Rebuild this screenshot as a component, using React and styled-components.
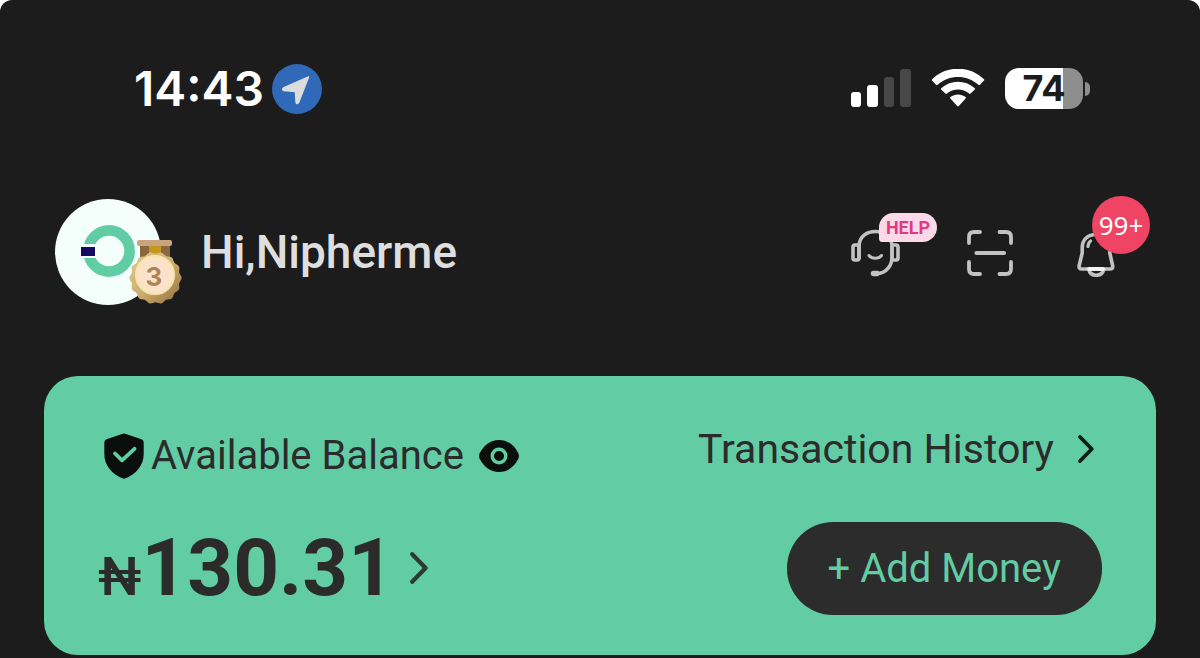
import React from "react";
import styled, { createGlobalStyle } from "styled-components";

const medalPoints = () => {
  const points = [];
  for (let i = 0; i <= 168; i++) {
    const angle = (i / 168) * Math.PI * 2;
    const radius = 25.2 + Math.cos(angle * 14) * 0.9;
    points.push(
      `${(26.5 + Math.cos(angle) * radius).toFixed(2)},${(
        38 +
        Math.sin(angle) * radius
      ).toFixed(2)}`
    );
  }
  return points.join(" ");
};

const LocationIcon = () => (
  <svg width="50" height="50" viewBox="0 0 50 50" aria-hidden="true">
    <circle cx="25" cy="25" r="25" fill="#2f69b7" />
    <path
      d="M36.5 13 L26.6 38.4 Q25.8 40 24.2 39 L23.4 27.4 L11.8 26.4 Q9.6 25.4 11.4 24 Z"
      fill="#dcdcdc"
      stroke="#dcdcdc"
      strokeWidth="1.5"
      strokeLinejoin="round"
    />
  </svg>
);

const SignalIcon = () => (
  <svg width="60" height="40" viewBox="0 0 60 40" aria-hidden="true">
    <rect x="0" y="23" width="10" height="15" rx="3" fill="#fff" />
    <rect x="16" y="16" width="11" height="22" rx="3" fill="#fff" />
    <rect x="33" y="8" width="10" height="30" rx="3" fill="#484848" />
    <rect x="49" y="0" width="11" height="38" rx="3" fill="#484848" />
  </svg>
);

const WifiIcon = () => (
  <svg width="54" height="40" viewBox="0 1 54 40" aria-hidden="true">
    <g fill="#fff">
      <path d="M1 12.6 Q0.4 12 1 11.2 C15.6 -2.8 38.4 -2.8 53 11.2 Q53.6 12 53 12.6 L49 16.8 Q48.2 17.5 47.4 16.8 C36 6.4 18 6.4 6.6 16.8 Q5.8 17.5 5 16.8 Z" />
      <path d="M10.2 21.6 Q9.5 20.9 10.2 20.2 C19.8 11.6 34.2 11.6 43.8 20.2 Q44.5 20.9 43.8 21.6 L39.6 25.6 Q38.9 26.2 38.1 25.6 C31.6 20 22.4 20 15.9 25.6 Q15.1 26.2 14.4 25.6 Z" />
      <path d="M19.4 30.6 Q18.6 29.8 19.4 29.1 C24 25.6 30 25.6 34.6 29.1 Q35.4 29.8 34.6 30.6 L27.8 38 Q27 38.8 26.2 38 Z" />
    </g>
  </svg>
);

const AvatarLogo = () => (
  <svg width="106" height="106" viewBox="0 0 106 106" aria-hidden="true">
    <circle cx="53" cy="53" r="53" fill="#f4fffc" />
    <circle
      cx="54"
      cy="52"
      r="20.6"
      fill="none"
      stroke="#60cda5"
      strokeWidth="10.6"
    />
    <rect x="24" y="45" width="17" height="14" fill="#f4fffc" />
    <rect x="26" y="48" width="14" height="9" fill="#150a63" />
  </svg>
);

const MedalIcon = () => (
  <svg width="54" height="66" viewBox="0 0 54 66" aria-hidden="true">
    <defs>
      <linearGradient id="medalEdge" x1="0" y1="0" x2="1" y2="1">
        <stop offset="0" stopColor="#e3cb94" />
        <stop offset="0.5" stopColor="#cfae72" />
        <stop offset="1" stopColor="#8f6f3c" />
      </linearGradient>
    </defs>
    <rect x="11" y="5" width="30" height="12" fill="#8a683f" />
    <rect x="20" y="5" width="12" height="12" fill="#c7961f" />
    <rect x="8" y="0" width="35" height="6" rx="2" fill="#c8a57a" />
    <polygon points={medalPoints()} fill="url(#medalEdge)" />
    <circle
      cx="26"
      cy="35"
      r="19"
      fill="#fbe2c9"
      stroke="#f8e6a8"
      strokeWidth="2"
    />
    <MedalNumber x="25" y="46" textAnchor="middle">
      3
    </MedalNumber>
  </svg>
);

const HeadsetIcon = () => (
  <svg
    width="50"
    height="50"
    viewBox="0 0 50 50"
    fill="none"
    stroke="#c2c2c2"
    strokeWidth="3.6"
    strokeLinecap="round"
    strokeLinejoin="round"
    aria-hidden="true"
  >
    <rect x="2" y="18" width="6" height="15" rx="2" />
    <rect x="41" y="18" width="6" height="15" rx="2" />
    <path d="M8 18 C9 9 16 4.5 24.5 4.5 C33 4.5 40 9 41 18 V30 C41 39 35 46 27 46.5" />
    <path d="M8 18 V31" />
    <path d="M18 28.5 C21 32.2 27.5 32.2 30.5 28.5" strokeWidth="3" />
    <path d="M22.5 46.5 H26" strokeWidth="5.5" />
  </svg>
);

const ScanIcon = () => (
  <svg
    width="50"
    height="50"
    viewBox="0 0 50 50"
    fill="none"
    stroke="#c2c2c2"
    strokeWidth="3.8"
    strokeLinecap="round"
    aria-hidden="true"
  >
    <path d="M6 16 V10 Q6 5 11 5 H17" />
    <path d="M36.5 5 H43 Q48 5 48 10 V16" />
    <path d="M48 35 V42 Q48 47 43 47 H36.5" />
    <path d="M17 47 H11 Q6 47 6 42 V35" />
    <path d="M13.5 26 H41" strokeWidth="4.2" />
  </svg>
);

const BellIcon = () => (
  <svg
    width="50"
    height="50"
    viewBox="0 0 50 50"
    fill="none"
    stroke="#c2c2c2"
    strokeWidth="3.6"
    strokeLinecap="round"
    strokeLinejoin="round"
    aria-hidden="true"
  >
    <path d="M7 42 Q3.4 42 4.2 38.5 L7.2 26 V21 C7.2 12.5 13 7.5 21 7.5 C29 7.5 34.8 12.5 34.8 21 V26 L37.6 38.5 Q38.4 42 35 42 Z" />
    <path d="M13 19.5 Q13.2 15.6 15.6 14" strokeWidth="3.2" />
    <path d="M14 43 C15.5 50 27 50 28.5 43" />
    <path d="M14 42 H28" stroke="#f2f2f2" strokeWidth="4" />
  </svg>
);

const ShieldIcon = () => (
  <svg width="40" height="46" viewBox="0 0 40 46" aria-hidden="true">
    <path
      d="M20 0.5 Q21 0.5 22 1 L37.5 6.3 Q39.7 7.2 39.7 9.5 V21 C39.7 33 31.5 41 21.8 45.3 Q20 46 18.2 45.3 C8.5 41 0.3 33 0.3 21 V9.5 Q0.3 7.2 2.5 6.3 L18 1 Q19 0.5 20 0.5 Z"
      fill="#0a0f0d"
    />
    <path
      d="M11 20.5 L18 27.3 L30.5 15.8"
      fill="none"
      stroke="#62cda5"
      strokeWidth="3.8"
      strokeLinecap="round"
      strokeLinejoin="round"
    />
  </svg>
);

const EyeIcon = () => (
  <svg width="40" height="32" viewBox="0 0 40 32" aria-hidden="true">
    <path
      d="M20 0 C29 0 35.5 5.5 39.3 13.2 Q40.6 16 39.3 18.8 C35.5 26.5 29 32 20 32 C11 32 4.5 26.5 0.7 18.8 Q-0.6 16 0.7 13.2 C4.5 5.5 11 0 20 0 Z"
      fill="#0a0f0d"
    />
    <circle
      cx="20"
      cy="16"
      r="6.8"
      fill="none"
      stroke="#62cda5"
      strokeWidth="3.4"
    />
  </svg>
);

const Chevron = ({ width, height, color }) => (
  <svg width={width} height={height} viewBox="0 0 18 32" aria-hidden="true">
    <path
      d="M2.2 2.2 L15.6 16 L2.2 29.8"
      fill="none"
      stroke={color}
      strokeWidth="4.2"
      strokeLinecap="round"
      strokeLinejoin="round"
    />
  </svg>
);

const App = () => {
  return (
    <>
      <GlobalStyle />
      <Screen>
        <StatusBar>
          <StatusGroup $gap="8px">
            <Clock>14:43</Clock>
            <LocationIcon />
          </StatusGroup>
          <StatusGroup $gap="20px">
            <SignalIcon />
            <WifiIcon />
            <Battery>
              <BatteryBody>74</BatteryBody>
              <BatteryTip />
            </Battery>
          </StatusGroup>
        </StatusBar>

        <Header>
          <Profile>
            <Avatar>
              <AvatarLogo />
              <Medal>
                <MedalIcon />
              </Medal>
            </Avatar>
            <Greeting>Hi,Nipherme</Greeting>
          </Profile>
          <Actions>
            <IconButton aria-label="Help">
              <HeadsetIcon />
              <HelpBadge>HELP</HelpBadge>
            </IconButton>
            <IconButton aria-label="Scan">
              <ScanIcon />
            </IconButton>
            <IconButton aria-label="Notifications">
              <BellIcon />
              <CountBadge>99+</CountBadge>
            </IconButton>
          </Actions>
        </Header>

        <BalanceCard>
          <BalanceColumn>
            <BalanceLabel>
              <ShieldIcon />
              <LabelText>Available Balance</LabelText>
              <IconButton aria-label="Hide balance">
                <EyeIcon />
              </IconButton>
            </BalanceLabel>
            <AmountLink href="#balance">
              <Amount>
                <Currency>₦</Currency>130.31
              </Amount>
              <Chevron width="18" height="32" color="#2c3a35" />
            </AmountLink>
          </BalanceColumn>
          <ActionColumn>
            <HistoryLink href="#history">
              Transaction History
              <Chevron width="16" height="28" color="#0c1d16" />
            </HistoryLink>
            <AddMoneyButton>+ Add Money</AddMoneyButton>
          </ActionColumn>
        </BalanceCard>
      </Screen>
    </>
  );
};

export default App;

const GlobalStyle = createGlobalStyle`
  * {
    box-sizing: border-box;
  }

  body {
    margin: 0;
    background-color: #fff;
    font-family: Roboto, "Liberation Sans", sans-serif;
  }

  svg {
    display: block;
    flex-shrink: 0;
  }
`;

const Screen = styled.main`
  min-height: 100vh;
  padding: 60px 44px 3px;
  border-radius: 12px 12px 0 0;
  background-color: #1c1c1c;
`;

const StatusBar = styled.div`
  display: flex;
  justify-content: space-between;
  align-items: center;
  height: 57px;
  padding: 0 66px 0 90px;
`;

const StatusGroup = styled.div`
  display: flex;
  align-items: center;
  gap: ${props => props.$gap};
`;

const Clock = styled.span`
  font-family: Inter, "Liberation Sans", sans-serif;
  font-size: 48px;
  font-weight: 600;
  line-height: 57px;
  color: #fff;
`;

const Battery = styled.div`
  display: flex;
  align-items: center;
  gap: 2px;
`;

const BatteryBody = styled.div`
  width: 78px;
  border-radius: 14px;
  background: linear-gradient(to right, #fff 74%, #8e8e8e 74%);
  font-family: Inter, "Liberation Sans", sans-serif;
  font-size: 36px;
  font-weight: 700;
  line-height: 41px;
  text-align: center;
  color: #1c1c1c;
`;

const BatteryTip = styled.div`
  width: 5px;
  height: 14px;
  border-radius: 0 5px 5px 0;
  background-color: #8e8e8e;
`;

const Header = styled.header`
  display: flex;
  justify-content: space-between;
  align-items: center;
  margin-top: 82px;
  padding: 0 31px 0 11px;
`;

const Profile = styled.div`
  display: flex;
  align-items: center;
  gap: 40px;
`;

const Avatar = styled.div`
  position: relative;
`;

const Medal = styled.div`
  position: absolute;
  right: -22px;
  bottom: -1px;
`;

const MedalNumber = styled.text`
  font-family: Inter, "Liberation Sans", sans-serif;
  font-size: 26px;
  font-weight: 700;
  fill: #ad8558;
`;

const Greeting = styled.h1`
  margin: 0;
  font-size: 46px;
  font-weight: 500;
  line-height: 56px;
  color: #dedede;
`;

const Actions = styled.div`
  display: flex;
  gap: 62px;
`;

const IconButton = styled.button`
  position: relative;
  padding: 0;
  border: none;
  background-color: transparent;
  font-family: inherit;
  cursor: pointer;
`;

const HelpBadge = styled.span`
  position: absolute;
  top: -14px;
  left: 28px;
  width: 58px;
  border-radius: 15px 15px 15px 4px;
  background-color: #fdd9e8;
  font-size: 18px;
  font-weight: 700;
  line-height: 29px;
  text-align: center;
  color: #df3a85;
`;

const CountBadge = styled.span`
  position: absolute;
  top: -31px;
  left: 17px;
  width: 58px;
  border-radius: 50%;
  background-color: #ef4463;
  font-family: "Noto Sans", sans-serif;
  font-size: 26px;
  line-height: 58px;
  text-align: center;
  color: #fff;
`;

const BalanceCard = styled.section`
  display: flex;
  justify-content: space-between;
  margin-top: 71px;
  padding: 48px 54px 40px;
  border-radius: 34px;
  background-color: #62cda5;
  color: #2b2b2b;
`;

const BalanceColumn = styled.div`
  display: flex;
  flex-direction: column;
  gap: 42px;
`;

const BalanceLabel = styled.div`
  display: flex;
  align-items: center;
  gap: 7px;
  padding: 8px 0 0 6px;
`;

const LabelText = styled.span`
  font-size: 40px;
  line-height: 48px;
  margin-right: 8px;
`;

const AmountLink = styled.a`
  display: flex;
  align-items: center;
  gap: 16px;
  color: inherit;
  text-decoration: none;
`;

const Amount = styled.span`
  font-size: 80px;
  font-weight: 700;
  line-height: 92px;
`;

const Currency = styled.span`
  font-size: 54px;
  font-weight: 500;
  line-height: 54px;
`;

const ActionColumn = styled.div`
  display: flex;
  flex-direction: column;
  align-items: flex-end;
  gap: 48px;
`;

const HistoryLink = styled.a`
  display: flex;
  align-items: center;
  gap: 24px;
  padding-right: 8px;
  font-size: 41px;
  line-height: 50px;
  color: inherit;
  text-decoration: none;
`;

const AddMoneyButton = styled.button`
  padding: 0 41px;
  border: none;
  border-radius: 46px;
  background-color: #2c2c2c;
  font-family: inherit;
  font-size: 40px;
  line-height: 93px;
  color: #62cda5;
  cursor: pointer;
`;
